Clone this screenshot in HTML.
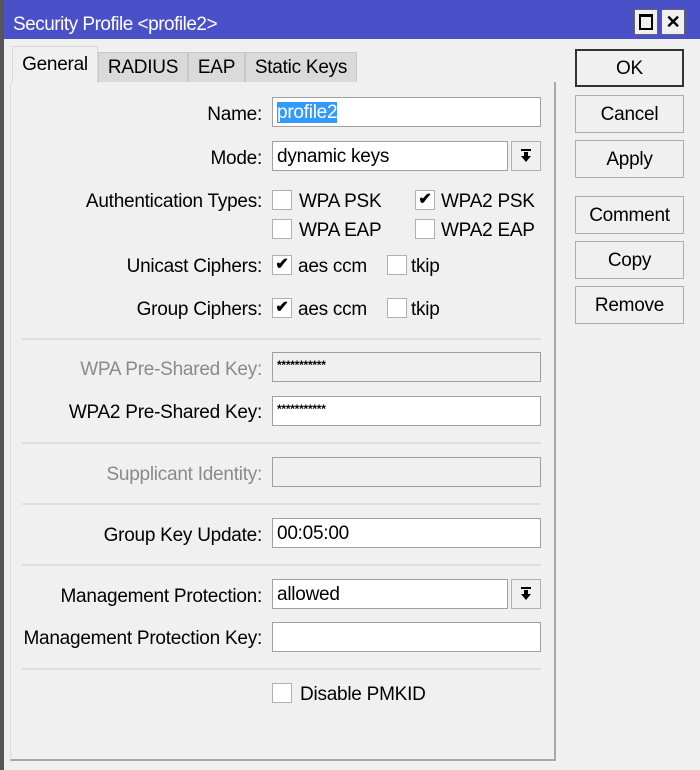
<!DOCTYPE html>
<html><head><meta charset="utf-8"><style>
*{box-sizing:border-box;margin:0;padding:0}
body{width:700px;height:770px;background:#f0f0f0;font-family:"Liberation Sans",sans-serif;font-size:19px;color:#000;position:relative;overflow:hidden;letter-spacing:-0.25px}
.a{position:absolute}
.t{position:absolute;white-space:nowrap;line-height:20px;padding-top:2px}
.r{text-align:right;width:262px;left:0}
.in{position:absolute;background:#fff;border:1px solid #a0a0a0;height:30px;padding:5px 4px 0;line-height:20px}
.g{background:#f0f0f0}
.cb{position:absolute;width:20px;height:20px;background:#fff;border:1px solid #b0b0b0;font-size:16px;line-height:18px;text-align:center;font-weight:bold}
.btn{position:absolute;left:575px;width:109px;height:38px;border:1px solid #adadad;background:#f0f0f0;text-align:center;line-height:38px}
.sep{position:absolute;left:22px;width:519px;height:2px;background:#dedede}
.dd{position:absolute;left:511px;width:30px;height:30px;border:1px solid #b0b0b0;background:#f0f0f0}
.dd svg{position:absolute;left:8px;top:7px}
.tab{position:absolute;top:52px;height:30px;background:#dadada;border:1px solid #c8c8c8;border-bottom:none;text-align:center;line-height:30px}
.gr{color:#8a8a8a}
</style></head><body>
<div class="a" style="left:0;top:0;width:4px;height:770px;background:#555"></div>
<div class="a" style="left:4px;top:0;width:696px;height:39px;background:#4a50c8"></div>
<div class="t" style="left:13px;top:13px;color:#fff;font-size:19px;letter-spacing:-0.5px">Security Profile &lt;profile2&gt;</div>
<div class="a" style="left:634px;top:9px;width:24px;height:26px;background:#f0f0f0;border:1px solid #666"><div class="a" style="left:4px;top:4px;width:14px;height:16px;border:2px solid #000;border-top-width:3px"></div></div>
<div class="a" style="left:661px;top:9px;width:24px;height:26px;background:#f0f0f0;border:1px solid #666;text-align:center;font-weight:bold;font-size:18px;line-height:24px">✕</div>

<div class="a" style="left:10px;top:82px;width:546px;height:679px;border-right:2px solid #a8a8a8;border-bottom:2px solid #a8a8a8;border-left:1px solid #ddd"></div>
<div class="tab" style="left:12px;top:46px;height:37px;width:86px;background:#f0f0f0;border-color:#d8d8d8;line-height:36px">General</div>
<div class="tab" style="left:98px;width:90px">RADIUS</div>
<div class="tab" style="left:188px;width:57px">EAP</div>
<div class="tab" style="left:245px;width:112px">Static Keys</div>

<div class="t r" style="top:103px">Name:</div>
<div class="in" style="left:272px;top:97px;width:269px"><span style="background:#3399ff;color:#fff">profile2</span></div>
<div class="t r" style="top:147px">Mode:</div>
<div class="in" style="left:272px;top:141px;width:236px">dynamic keys</div>
<div class="dd" style="top:141px"><svg width="12" height="14" viewBox="0 0 12 14"><rect x="1" y="0" width="10" height="2"/><rect x="4" y="3" width="4" height="5"/><path d="M1 7h10l-5 6z"/></svg></div>

<div class="t r" style="top:190px">Authentication Types:</div>
<div class="cb" style="left:272px;top:190px"></div><div class="t" style="left:299px;top:190px">WPA PSK</div>
<div class="cb" style="left:415px;top:190px">✔</div><div class="t" style="left:441px;top:190px">WPA2 PSK</div>
<div class="cb" style="left:272px;top:219px"></div><div class="t" style="left:299px;top:219px">WPA EAP</div>
<div class="cb" style="left:415px;top:219px"></div><div class="t" style="left:441px;top:219px">WPA2 EAP</div>

<div class="t r" style="top:255px">Unicast Ciphers:</div>
<div class="cb" style="left:272px;top:255px">✔</div><div class="t" style="left:298px;top:255px">aes ccm</div>
<div class="cb" style="left:387px;top:255px"></div><div class="t" style="left:411px;top:255px">tkip</div>
<div class="t r" style="top:298px">Group Ciphers:</div>
<div class="cb" style="left:272px;top:298px">✔</div><div class="t" style="left:298px;top:298px">aes ccm</div>
<div class="cb" style="left:387px;top:298px"></div><div class="t" style="left:411px;top:298px">tkip</div>

<div class="sep" style="top:338px"></div>
<div class="t r gr" style="top:358px">WPA Pre-Shared Key:</div>
<div class="in g" style="left:272px;top:352px;width:269px;font-size:12px;line-height:14px;font-weight:bold">***********</div>
<div class="t r" style="top:401px">WPA2 Pre-Shared Key:</div>
<div class="in" style="left:272px;top:396px;width:269px;font-size:12px;line-height:14px;font-weight:bold">***********</div>

<div class="sep" style="top:442px"></div>
<div class="t r gr" style="top:463px">Supplicant Identity:</div>
<div class="in g" style="left:272px;top:457px;width:269px"></div>

<div class="sep" style="top:503px"></div>
<div class="t r" style="top:524px">Group Key Update:</div>
<div class="in" style="left:272px;top:518px;width:269px">00:05:00</div>

<div class="sep" style="top:564px"></div>
<div class="t r" style="top:585px">Management Protection:</div>
<div class="in" style="left:272px;top:579px;width:236px">allowed</div>
<div class="dd" style="top:579px"><svg width="12" height="14" viewBox="0 0 12 14"><rect x="1" y="0" width="10" height="2"/><rect x="4" y="3" width="4" height="5"/><path d="M1 7h10l-5 6z"/></svg></div>
<div class="t r" style="top:627px">Management Protection Key:</div>
<div class="in" style="left:272px;top:622px;width:269px"></div>

<div class="sep" style="top:668px"></div>
<div class="cb" style="left:272px;top:683px"></div><div class="t" style="left:300px;top:683px">Disable PMKID</div>

<div class="btn" style="top:49px;border:2px solid #333;line-height:36px">OK</div>
<div class="btn" style="top:95px">Cancel</div>
<div class="btn" style="top:140px">Apply</div>
<div class="btn" style="top:196px">Comment</div>
<div class="btn" style="top:241px">Copy</div>
<div class="btn" style="top:286px">Remove</div>
</body></html>
